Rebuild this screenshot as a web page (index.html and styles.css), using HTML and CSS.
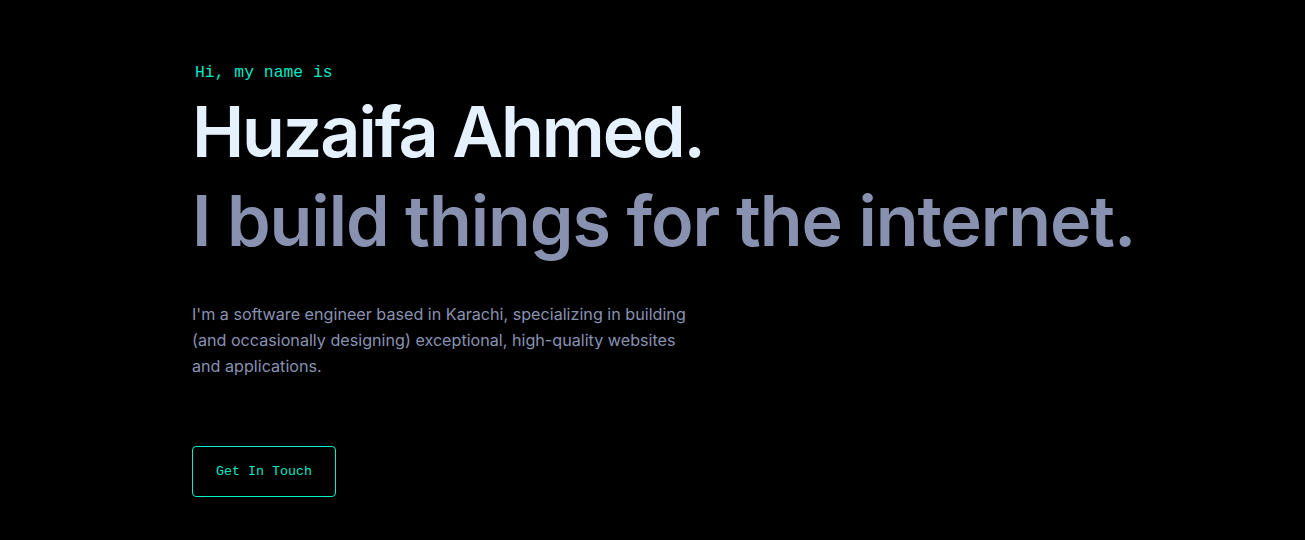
FILE: index.html
```html
<!DOCTYPE html>
<html lang="en">
<head>
<meta charset="utf-8">
<title>Huzaifa Ahmed</title>
<link rel="stylesheet" href="styles.css">
</head>
<body>
<main class="page">
  <section class="hero">
    <p class="greeting">Hi, my name is</p>
    <h1 class="big-heading name">Huzaifa Ahmed.</h1>
    <h2 class="big-heading tagline">I build things for the internet.</h2>
    <p class="intro">I'm a software engineer based in Karachi, specializing in building (and occasionally designing) exceptional, high-quality websites and applications.</p>
    <a class="cta" href="#contact">Get In Touch</a>
  </section>
</main>
</body>
</html>
```

FILE: styles.css
```css
* { box-sizing: border-box; }
html, body {
  margin: 0;
  padding: 0;
  background: #000;
}
body {
  font-family: Inter, "Noto Sans", sans-serif;
  color: #8892b0;
  height: 540px;
  overflow: hidden;
}
.page {
  padding: 0 192px;
}
.hero {
  display: flex;
  flex-direction: column;
  align-items: flex-start;
  padding-top: 63px;
}
.greeting {
  margin: 0 0 4px 3px;
  font-family: "Liberation Mono", monospace;
  font-size: 16.4px;
  line-height: 20px;
  color: #00e8c6;
}
.big-heading {
  margin: 0;
  font-size: 70px;
  line-height: 89px;
  font-weight: 600;
  white-space: nowrap;
}
.name {
  color: #e6f1ff;
  letter-spacing: -2.1px;
}
.tagline {
  color: #8892b0;
  letter-spacing: -1.05px;
}
.intro {
  margin: 36px 0 0;
  max-width: 505px;
  font-size: 16.15px;
  line-height: 26px;
  color: #8892b0;
}
.cta {
  margin-top: 67px;
  display: inline-block;
  width: 144px;
  height: 51px;
  line-height: 49px;
  text-align: center;
  border: 1px solid #00f0cc;
  border-radius: 4px;
  color: #00e8c6;
  font-family: "Liberation Mono", monospace;
  font-size: 13.3px;
  text-decoration: none;
}
```
